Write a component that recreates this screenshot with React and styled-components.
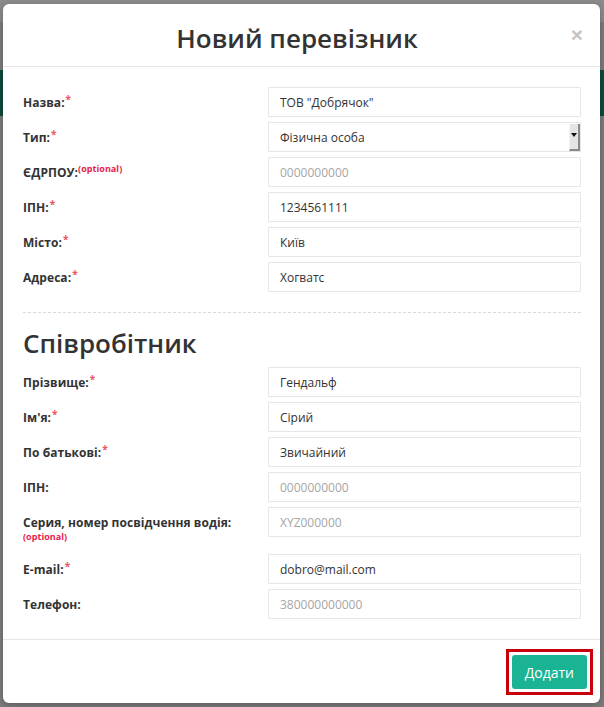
import React from 'react';
import styled, { createGlobalStyle } from 'styled-components';

const Global = createGlobalStyle`
  html, body { margin: 0; padding: 0; }
  body {
    font-family: "Open Sans", "Liberation Sans", sans-serif;
    color: #333;
  }
  * { box-sizing: border-box; }
`;

const Backdrop = styled.div`
  width: 604px;
  height: 707px;
  overflow: hidden;
  padding: 4px 4px 0 3px;
  background:
    linear-gradient(to bottom, transparent 70px, #0e4a3d 70px, #0e4a3d 116px, transparent 116px),
    linear-gradient(to bottom, #8a8a8a 0, #8a8a8a 22px, #7b7b7b 22px);
`;

const Modal = styled.div`
  position: relative;
  width: 597px;
  background: #fff;
  border-radius: 6px;
  box-shadow: 0 2px 6px rgba(0, 0, 0, 0.25);
`;

const Header = styled.div`
  position: relative;
  padding: 20px 24px 13px 15px;
  border-bottom: 1px solid #e5e5e5;
  text-align: center;
`;

const Title = styled.h4`
  margin: 0;
  font-size: 26px;
  line-height: 29px;
  font-weight: 600;
  color: #333;
`;

const Close = styled.button`
  position: absolute;
  top: 20px;
  right: 17px;
  border: 0;
  background: none;
  padding: 0;
  font-family: "Liberation Sans", sans-serif;
  font-size: 21px;
  line-height: 21px;
  font-weight: 700;
  color: #c4c4c4;
`;

const Body = styled.div`
  padding: 20px 19px 20px 20px;
`;

const Fields = styled.div`
  display: flex;
  flex-direction: column;
  gap: 5px;
`;

const Row = styled.div`
  display: grid;
  grid-template-columns: 245px 1fr;
  align-items: start;
`;

const Label = styled.label`
  padding: 8px 0 ${(p) => (p.$tall ? '6px' : '0')};
  font-size: 12px;
  line-height: 16px;
  font-weight: 700;
  letter-spacing: 0.05px;
  color: #333;
`;

const Req = styled.sup`
  color: #ed5565;
  font-size: 10px;
  line-height: 0;
  vertical-align: 4px;
  margin-left: 1px;
`;

const OptSup = styled.sup`
  color: #e8234a;
  font-size: 9px;
  line-height: 0;
  vertical-align: 5px;
  font-weight: 700;
`;

const OptLine = styled.div`
  color: #e8234a;
  font-size: 9px;
  line-height: 12px;
  font-weight: 700;
`;

const Input = styled.input`
  display: block;
  width: 100%;
  height: 30px;
  border: 1px solid #e5e6e7;
  border-radius: 1px;
  padding: 0 11px;
  font-family: "Open Sans", "Liberation Sans", sans-serif;
  font-size: 12px;
  color: #333;
  background: #fff;
  outline: none;
  &::placeholder { color: #a6a6a6; opacity: 1; }
`;

const SelectBox = styled.div`
  display: flex;
  align-items: center;
  justify-content: space-between;
  height: 30px;
  border: 1px solid #e5e6e7;
  padding: 0 0 0 11px;
  font-size: 12px;
  color: #333;
`;

const Spinner = styled.span`
  display: flex;
  justify-content: center;
  padding-top: 9px;
  width: 11px;
  height: 27px;
  background: #e4e4e4;
  border-left: 1px solid #f4f4f4;
  border-right: 2px solid #8a8a8a;
  border-bottom: 2px solid #8a8a8a;
`;

const Arrow = styled.span`
  width: 0;
  height: 0;
  border-left: 3px solid transparent;
  border-right: 3px solid transparent;
  border-top: 4px solid #111;
`;

const Divider = styled.hr`
  margin: 20px 0 0;
  border: 0;
  border-top: 1px dashed #d9d9d9;
`;

const Section = styled.h2`
  margin: 16px 0 9px;
  font-size: 26px;
  line-height: 29px;
  font-weight: 600;
  color: #333;
`;

const Footer = styled.div`
  display: flex;
  justify-content: flex-end;
  padding: 9px 7px 8px;
  border-top: 1px solid #e5e5e5;
`;

const Highlight = styled.div`
  border: 3px solid #c8000a;
  padding: 3px;
`;

const Button = styled.button`
  display: block;
  height: 34px;
  padding: 0 13px;
  border: 0;
  border-radius: 3px;
  background: #1ab394;
  color: #fff;
  font-family: "Open Sans", "Liberation Sans", sans-serif;
  font-size: 14px;
`;

const company = [
  { label: 'Назва:', req: true, value: 'ТОВ "Добрячок"' },
  { label: 'Тип:', req: true, select: 'Фізична особа' },
  { label: 'ЄДРПОУ:', optional: true, placeholder: '0000000000' },
  { label: 'ІПН:', req: true, value: '1234561111' },
  { label: 'Місто:', req: true, value: 'Київ' },
  { label: 'Адреса:', req: true, value: 'Хогватс' },
];

const staff = [
  { label: 'Прізвище:', req: true, value: 'Гендальф' },
  { label: "Ім'я:", req: true, value: 'Сірий' },
  { label: 'По батькові:', req: true, value: 'Звичайний' },
  { label: 'ІПН:', placeholder: '0000000000' },
  { label: 'Серия, номер посвідчення водія:', optLine: true, placeholder: 'XYZ000000' },
  { label: 'E-mail:', req: true, value: 'dobro@mail.com' },
  { label: 'Телефон:', placeholder: '380000000000' },
];

function Field({ f }) {
  return (
    <Row>
      <Label $tall={f.optLine}>
        {f.label}
        {f.req && <Req>*</Req>}
        {f.optional && <OptSup>(optional)</OptSup>}
        {f.optLine && <OptLine>(optional)</OptLine>}
      </Label>
      {f.select ? (
        <SelectBox>
          {f.select}
          <Spinner><Arrow /></Spinner>
        </SelectBox>
      ) : (
        <Input defaultValue={f.value} placeholder={f.placeholder} readOnly />
      )}
    </Row>
  );
}

export default function App() {
  return (
    <>
      <Global />
      <Backdrop>
        <Modal>
          <Header>
            <Title>Новий перевізник</Title>
            <Close>×</Close>
          </Header>
          <Body>
            <Fields>
              {company.map((f, i) => <Field key={i} f={f} />)}
            </Fields>
            <Divider />
            <Section>Співробітник</Section>
            <Fields>
              {staff.map((f, i) => <Field key={i} f={f} />)}
            </Fields>
          </Body>
          <Footer>
            <Highlight>
              <Button>Додати</Button>
            </Highlight>
          </Footer>
        </Modal>
      </Backdrop>
    </>
  );
}
